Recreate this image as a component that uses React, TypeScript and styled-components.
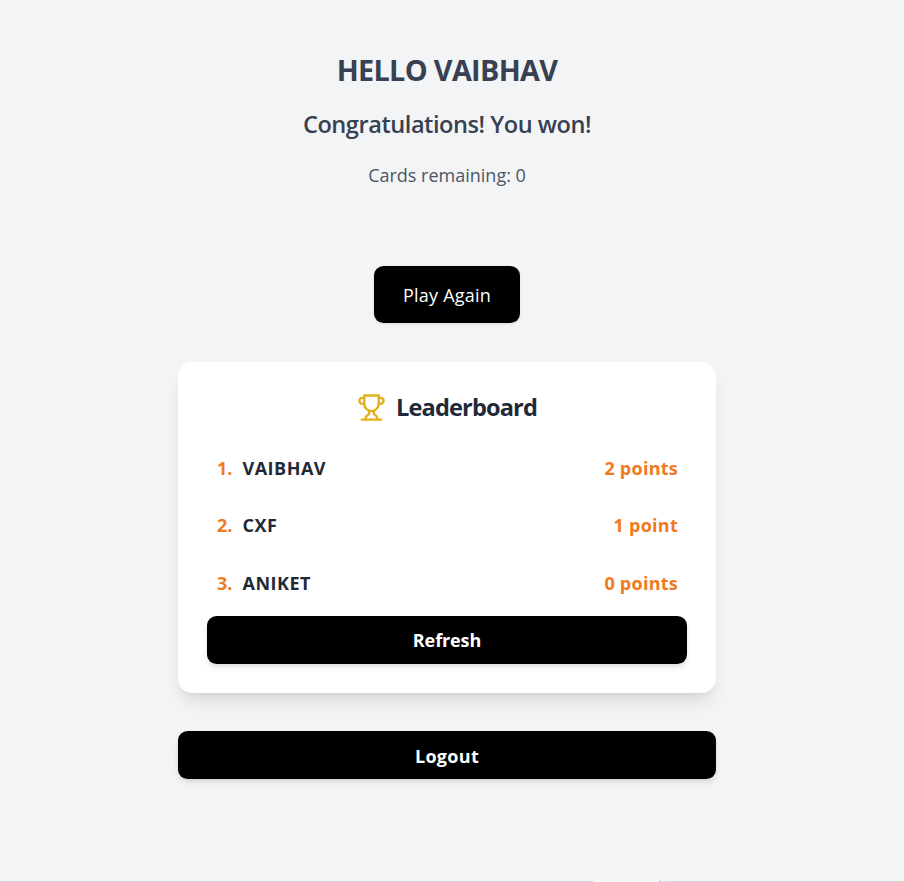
import React from "react";
import styled, { createGlobalStyle } from "styled-components";

const Global = createGlobalStyle`
  *, *::before, *::after { box-sizing: border-box; }
  html, body { margin: 0; background: #f3f4f6; overflow: hidden; }
  body { font-family: "Open Sans", sans-serif; }
  h1, h2, h3, p, ol { margin: 0; padding: 0; }
`;

const Page = styled.main`
  height: 882px;
  padding-top: 48px;
  padding-right: 10px;
  display: flex;
  flex-direction: column;
  align-items: center;
`;

const Title = styled.h1`
  font: 700 28.8px/43px "Open Sans", sans-serif;
  letter-spacing: -0.65px;
  color: #374151;
`;

const Message = styled.h2`
  margin-top: 14px;
  font: 600 23.6px/38px "Open Sans", sans-serif;
  letter-spacing: -0.47px;
  color: #374151;
`;

const Remaining = styled.p`
  margin-top: 18px;
  font: 400 18px/29px "Open Sans", sans-serif;
  color: #4b5563;
`;

const Button = styled.button`
  border: 0;
  border-radius: 9.6px;
  background: #000;
  color: #fff;
  font: 400 18px/29px "Open Sans", sans-serif;
  padding: 0;
  box-shadow: 0 4px 7px -1px rgba(0, 0, 0, 0.1), 0 2px 5px -2px rgba(0, 0, 0, 0.1);
`;

const PlayButton = styled(Button)`
  margin-top: 76px;
  width: 146px;
  height: 57px;
  flex: none;
  padding-top: 2px;
  letter-spacing: 0.22px;
  box-shadow: 0 1px 3px rgba(0, 0, 0, 0.1);
`;

const WideButton = styled(Button)<{ $tracking: number; $drop: number }>`
  display: block;
  width: 100%;
  height: 48px;
  font-weight: 700;
  letter-spacing: ${(p) => p.$tracking}px;
  padding-top: ${(p) => p.$drop}px;
`;

const Card = styled.section`
  width: 538px;
  height: 331px;
  flex: none;
  margin: 39px 0 38px;
  padding: 29px;
  border-radius: 14.4px;
  background: #fff;
  box-shadow: 0 12px 18px -4px rgba(0, 0, 0, 0.1), 0 5px 7px -5px rgba(0, 0, 0, 0.1);
`;

const Heading = styled.h3`
  height: 34px;
  padding-bottom: 2px;
  display: flex;
  align-items: center;
  justify-content: center;
  gap: 10px;
  font: 700 23.6px/32px "Open Sans", sans-serif;
  letter-spacing: -0.86px;
  color: #1f2937;
`;

const List = styled.ol`
  list-style: none;
  margin: 15px 0 0;
  height: 176px;
`;

const Row = styled.li`
  height: 57.4px;
  padding: 0 9px 0 10px;
  display: flex;
  align-items: center;
  font: 700 18px/29px "Open Sans", sans-serif;
  color: #1f2937;

  &:nth-child(2) {
    padding-bottom: 1px;
  }
`;

const Rank = styled.span`
  width: 25.5px;
  color: #f07a20;
`;

const Name = styled.span`
  letter-spacing: 0.5px;
`;

const Points = styled.span`
  margin-left: auto;
  letter-spacing: 0.25px;
  color: #f07a20;
`;

const Footer = styled.div`
  width: 538px;
`;

const BottomEdge = styled.div`
  height: 1px;
  width: 904px;
  margin: auto -10px 0 0;
  align-self: flex-end;
  display: grid;
  grid-template-columns: 593px 66px 2px 5px 1fr;
`;

const Edge = styled.span<{ $tone: string }>`
  background: ${(p) => p.$tone};
`;

const edgeTones = ["#d3d4d5", "#f8f8f9", "#bbbcbd", "#e5e6e7", "#d3d4d5"];

const Trophy = () => (
  <svg width="29" height="29" viewBox="0 0 24 24" fill="none" stroke="#e3b31c" strokeWidth="2" strokeLinecap="round" strokeLinejoin="round">
    <path d="M6 9H4.5a2.5 2.5 0 0 1 0-5H6" />
    <path d="M18 9h1.5a2.5 2.5 0 0 0 0-5H18" />
    <path d="M4 22h16" />
    <path d="M10 14.66V17c0 .55-.47.98-.97 1.21C7.85 18.75 7 20.24 7 22" />
    <path d="M14 14.66V17c0 .55.47.98.97 1.21C16.15 18.75 17 20.24 17 22" />
    <path d="M18 2H6v7a6 6 0 0 0 12 0V2Z" />
  </svg>
);

const players = [
  { name: "VAIBHAV", points: "2 points" },
  { name: "CXF", points: "1 point" },
  { name: "ANIKET", points: "0 points" },
];

export default function App() {
  return (
    <>
      <Global />
      <Page>
        <Title>HELLO VAIBHAV</Title>
        <Message>Congratulations! You won!</Message>
        <Remaining>Cards remaining: 0</Remaining>
        <PlayButton>Play Again</PlayButton>
        <Card>
          <Heading><Trophy />Leaderboard</Heading>
          <List>
            {players.map((player, i) => (
              <Row key={player.name}>
                <Rank>{i + 1}.</Rank>
                <Name>{player.name}</Name>
                <Points>{player.points}</Points>
              </Row>
            ))}
          </List>
          <WideButton $tracking={-0.1} $drop={0}>Refresh</WideButton>
        </Card>
        <Footer><WideButton $tracking={0.3} $drop={2}>Logout</WideButton></Footer>
        <BottomEdge>
          {edgeTones.map((tone, i) => <Edge key={i} $tone={tone} />)}
        </BottomEdge>
      </Page>
    </>
  );
}
